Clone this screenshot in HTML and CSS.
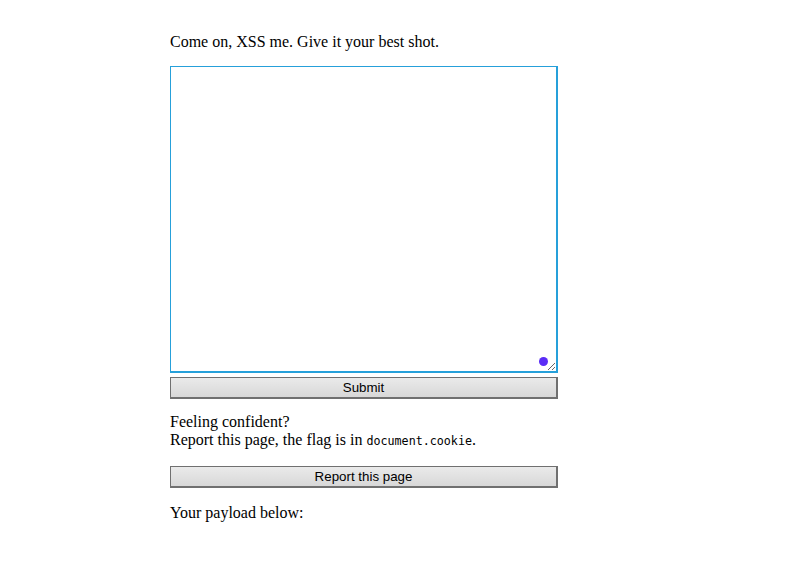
FILE: index.html
```html
<!DOCTYPE html>
<html>
<head>
<meta charset="utf-8">
<link rel="stylesheet" href="styles.css">
</head>
<body>
<main class="page">
  <p class="intro">Come on, XSS me. Give it your best shot.</p>
  <form class="form">
    <div class="field">
      <textarea class="payload"></textarea>
      <span class="dot"></span>
    </div>
    <button type="button" class="btn btn-submit">Submit</button>
  </form>
  <p class="report-text">Feeling confident?<br>Report this page, the flag is in <code>document.cookie</code>.</p>
  <button type="button" class="btn btn-report">Report this page</button>
  <p class="below">Your payload below:</p>
</main>
</body>
</html>
```
FILE: styles.css
```css
html, body {
  margin: 0;
  padding: 0;
  background: #fff;
}
body {
  font-family: "Liberation Serif", "Times New Roman", serif;
  font-size: 16px;
  line-height: 18px;
  color: #000;
}
.page {
  width: 388px;
  padding: 33px 0 0 170px;
  display: flex;
  flex-direction: column;
}
.intro {
  margin: 0;
}
.form {
  margin: 15px 0 0;
  display: flex;
  flex-direction: column;
}
.field {
  position: relative;
  height: 307px;
}
.payload {
  display: block;
  box-sizing: border-box;
  width: 388px;
  height: 307px;
  margin: 0;
  padding: 2px;
  border-style: solid;
  border-color: #26a0da;
  border-width: 1px 2px 2px 1px;
  background: #fff;
  outline: none;
  resize: both;
  font-family: "Liberation Mono", monospace;
  font-size: 13px;
}
.dot {
  position: absolute;
  left: 369px;
  top: 291px;
  width: 9px;
  height: 9px;
  border-radius: 50%;
  background: #5a2cf6;
}
.btn {
  box-sizing: border-box;
  width: 388px;
  height: 22px;
  margin: 0;
  padding: 0;
  border-style: solid;
  border-color: #707070;
  border-width: 1px 2px 2px 1px;
  background: linear-gradient(#eaeaea, #d8d8d8);
  font-family: "Liberation Sans", Arial, sans-serif;
  font-size: 13.33px;
  color: #000;
  line-height: 18px;
}
.btn-submit {
  margin-top: 4px;
}
.report-text {
  margin: 14px 0 0;
}
code {
  font-family: "DejaVu Sans Mono", monospace;
  font-size: 11.7px;
}
.btn-report {
  margin-top: 16px;
}
.below {
  margin: 16px 0 0;
}
```
